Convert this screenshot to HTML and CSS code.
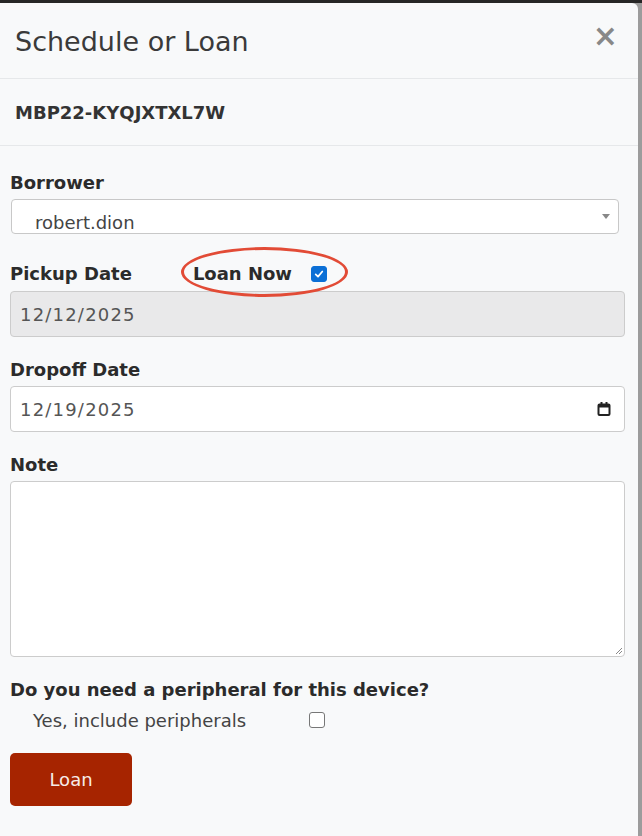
FILE: index.html
```html
<!DOCTYPE html>
<html>
<head>
<meta charset="utf-8">
<link rel="stylesheet" href="styles.css">
</head>
<body>
<div class="modal">
  <div class="modal-header">
    <h1 class="title">Schedule or Loan</h1>
    <span class="close">&times;</span>
  </div>
  <div class="device">MBP22-KYQJXTXL7W</div>
  <div class="modal-body">
    <div class="group first">
      <label class="label">Borrower</label>
      <div class="select">
        <span class="select-text">robert.dion</span>
        <span class="caret"></span>
      </div>
    </div>
    <div class="group">
      <div class="label-row">
        <label class="label">Pickup Date</label>
        <label class="label loan-now">Loan Now <span class="check checked"><svg viewBox="0 0 16 16" width="16" height="16"><path d="M4.2 8.4 L6.9 11 L11.8 5.2" fill="none" stroke="#fff" stroke-width="2" stroke-linecap="round" stroke-linejoin="round"/></svg></span></label>
        <span class="ellipse"></span>
      </div>
      <div class="input disabled">12/12/2025</div>
    </div>
    <div class="group">
      <label class="label">Dropoff Date</label>
      <div class="input">12/19/2025
        <svg class="cal" viewBox="0 0 14 16" width="14" height="16"><rect x="1.5" y="3.5" width="11" height="10.5" rx="1" fill="none" stroke="#222" stroke-width="2"/><rect x="1.5" y="3.5" width="11" height="3" fill="#222"/><rect x="3.5" y="1" width="2" height="3" fill="#222"/><rect x="8.5" y="1" width="2" height="3" fill="#222"/></svg>
      </div>
    </div>
    <div class="group">
      <label class="label">Note</label>
      <div class="textarea">
        <svg class="grip" viewBox="0 0 10 10" width="10" height="10"><path d="M9 3 L3 9 M9 6 L6 9" stroke="#888" stroke-width="1"/></svg>
      </div>
    </div>
    <div class="group last">
      <label class="label">Do you need a peripheral for this device?</label>
      <div class="yes-row">
        <span class="yes-text">Yes, include peripherals</span>
        <span class="check"></span>
      </div>
    </div>
    <button class="btn">Loan</button>
  </div>
</div>
</body>
</html>
```
FILE: styles.css
```css
* { box-sizing: border-box; }
html, body { margin: 0; padding: 0; }
body {
  width: 642px;
  height: 836px;
  background: #9c9c9c;
  border-top: 3px solid #262626;
  font-family: "DejaVu Sans", Verdana, sans-serif;
  color: #333;
  overflow: hidden;
}
.modal {
  width: 638px;
  height: 833px;
  background: #f8f9fa;
  border-top-right-radius: 6px;
  display: flex;
  flex-direction: column;
}
.modal-header {
  height: 76px;
  border-bottom: 1px solid #e6e8ea;
  display: flex;
  align-items: center;
  justify-content: space-between;
  padding: 0 20px 0 15px;
}
.title {
  margin: 0;
  font-size: 27px;
  font-weight: normal;
  color: #3a3a3a;
  padding-top: 2px;
}
.close {
  font-size: 30px;
  font-weight: bold;
  color: #888;
  line-height: 1;
  margin-top: -10px;
}
.device {
  height: 67px;
  border-bottom: 1px solid #e6e8ea;
  display: flex;
  align-items: center;
  padding: 0 15px;
  font-weight: bold;
  font-size: 18px;
  color: #333;
}
.modal-body {
  padding: 25px 13px 0 10px;
  display: flex;
  flex-direction: column;
}
.group {
  display: flex;
  flex-direction: column;
  margin-bottom: 21px;
}
.group.first { margin-bottom: 28px; }
.label {
  display: block;
  font-size: 18px;
  font-weight: bold;
  line-height: 24px;
  margin-bottom: 4px;
  color: #2b2b2b;
}
.label-row {
  display: flex;
  align-items: center;
  position: relative;
  height: 24px;
  margin-bottom: 5px;
}
.label-row .label { margin-bottom: 0; }
.loan-now {
  margin-left: 61px;
  display: flex;
  align-items: center;
}
.loan-now .check { margin-left: 19px; }
.ellipse {
  position: absolute;
  left: 171px;
  top: -15px;
  width: 167px;
  height: 50px;
  border: 3px solid #e24b36;
  border-radius: 50%;
  pointer-events: none;
}
.select {
  width: 608px;
  margin-left: 1px;
  height: 35px;
  background: #fff;
  border: 1px solid #c8c8c8;
  border-radius: 4px;
  display: flex;
  align-items: flex-end;
  padding: 0 12px 0 23px;
  position: relative;
  overflow: hidden;
}
.select-text {
  font-size: 18px;
  color: #444;
  line-height: 21px;
}
.caret {
  position: absolute;
  right: 8px;
  top: 14px;
  width: 0;
  height: 0;
  border-left: 4px solid transparent;
  border-right: 4px solid transparent;
  border-top: 5px solid #888;
}
.input {
  width: 615px;
  height: 46px;
  background: #fff;
  border: 1px solid #ccc;
  border-radius: 4px;
  display: flex;
  align-items: center;
  justify-content: space-between;
  padding: 0 13px 0 9px;
  font-size: 18px;
  letter-spacing: 1.2px;
  color: #555;
}
.input.disabled { background: #e9e9ea; }
.cal { display: block; }
.textarea {
  width: 615px;
  height: 176px;
  background: #fff;
  border: 1px solid #ccc;
  border-radius: 4px;
  position: relative;
}
.grip { position: absolute; right: 1px; bottom: 1px; }
.check {
  width: 16px;
  height: 16px;
  border: 1.5px solid #777;
  border-radius: 3px;
  background: #fff;
  display: inline-flex;
  align-items: center;
  justify-content: center;
  flex: none;
}
.check.checked {
  background: #0b6fd6;
  border-color: #0b6fd6;
}
.check svg { display: block; }
.yes-row {
  display: flex;
  align-items: center;
  padding-left: 23px;
  height: 24px;
  margin-top: 2px;
}
.yes-text {
  font-size: 18px;
  color: #444;
  width: 276px;
}
.btn {
  width: 122px;
  height: 53px;
  background: #a62400;
  border: none;
  border-radius: 5px;
  color: #f6ece8;
  font-family: "DejaVu Sans", Verdana, sans-serif;
  font-size: 18px;
  padding: 0;
}
```
